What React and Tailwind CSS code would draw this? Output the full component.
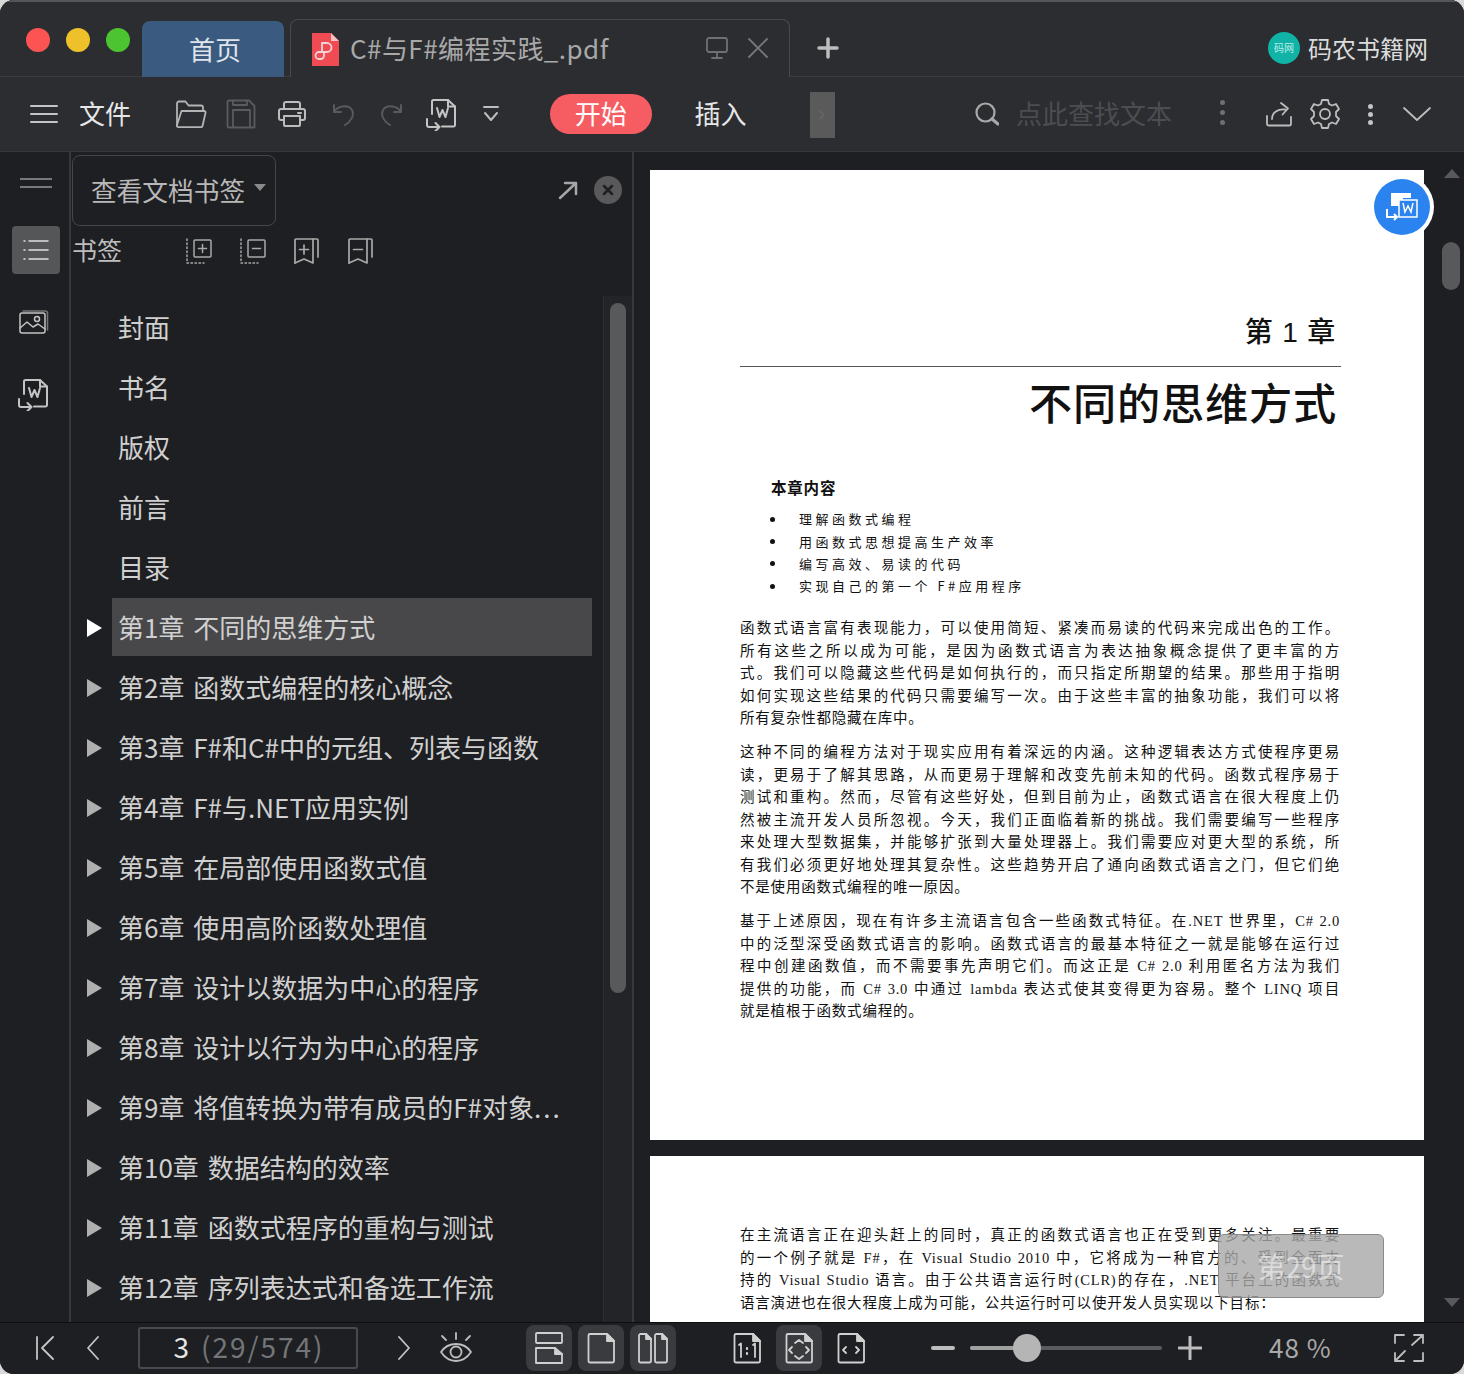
import React from "react";

const S = ({ w = 32, h = 32, vb, c = "#bdbdbd", sw = 2, children, className = "" }) => (
  <svg width={w} height={h} viewBox={vb || `0 0 ${w} ${h}`} fill="none" stroke={c} strokeWidth={sw} strokeLinecap="round" strokeLinejoin="round" className={`shrink-0 ${className}`}>
    {children}
  </svg>
);

const Dots = ({ c = "#9a9a9a", gap = "gap-[5px]", size = "w-[5px] h-[5px]" }) => (
  <div className={`flex flex-col ${gap}`}>
    <div className={`${size} rounded-full`} style={{ background: c }} />
    <div className={`${size} rounded-full`} style={{ background: c }} />
    <div className={`${size} rounded-full`} style={{ background: c }} />
  </div>
);

const WordConvert = ({ c = "#c4c4c4" }) => (
  <S w={34} h={34} c={c} sw={2}>
    <path d="M7 17V4.5a1.5 1.5 0 0 1 1.5-1.5H23l7 6.5V28a1.5 1.5 0 0 1-1.5 1.5H17" />
    <path d="M23 3v6.5h7" />
    <path d="M12 11l2.5 9 3-7 3 7 2.5-9" />
    <path d="M2 22v6a2 2 0 0 0 2 2h10M10.500 26l4 4-4 4" />
  </S>
);

const chapters = [
  ["封面"], ["书名"], ["版权"], ["前言"], ["目录"],
  ["第1章 不同的思维方式", 1, 1],
  ["第2章 函数式编程的核心概念", 1],
  ["第3章 F#和C#中的元组、列表与函数", 1],
  ["第4章 F#与.NET应用实例", 1],
  ["第5章 在局部使用函数式值", 1],
  ["第6章 使用高阶函数处理值", 1],
  ["第7章 设计以数据为中心的程序", 1],
  ["第8章 设计以行为为中心的程序", 1],
  [<>第9章 将值转换为带有成员的F#对象<span className="tracking-[2px]">...</span></>, 1],
  ["第10章 数据结构的效率", 1],
  ["第11章 函数式程序的重构与测试", 1],
  ["第12章 序列表达式和备选工作流", 1],
];

const p1 = ["函数式语言富有表现能力，可以使用简短、紧凑而易读的代码来完成出色的工作。", "所有这些之所以成为可能，是因为函数式语言为表达抽象概念提供了更丰富的方", "式。我们可以隐藏这些代码是如何执行的，而只指定所期望的结果。那些用于指明", "如何实现这些结果的代码只需要编写一次。由于这些丰富的抽象功能，我们可以将"];
const p2 = ["这种不同的编程方法对于现实应用有着深远的内涵。这种逻辑表达方式使程序更易", "读，更易于了解其思路，从而更易于理解和改变先前未知的代码。函数式程序易于", "测试和重构。然而，尽管有这些好处，但到目前为止，函数式语言在很大程度上仍", "然被主流开发人员所忽视。今天，我们正面临着新的挑战。我们需要编写一些程序", "来处理大型数据集，并能够扩张到大量处理器上。我们需要应对更大型的系统，所", "有我们必须更好地处理其复杂性。这些趋势开启了通向函数式语言之门，但它们绝"];
const p3 = ["基于上述原因，现在有许多主流语言包含一些函数式特征。在.NET 世界里，C# 2.0", "中的泛型深受函数式语言的影响。函数式语言的最基本特征之一就是能够在运行过", "程中创建函数值，而不需要事先声明它们。而这正是 C# 2.0 利用匿名方法为我们", "提供的功能，而 C# 3.0 中通过 lambda 表达式使其变得更为容易。整个 LINQ 项目"];
const p4 = ["在主流语言正在迎头赶上的同时，真正的函数式语言也正在受到更多关注。最重要", "的一个例子就是 F#，在 Visual Studio 2010 中，它将成为一种官方的、受到全面支", "持的 Visual Studio 语言。由于公共语言运行时(CLR)的存在，.NET 平台上的函数式"];

const pdfFont = "font-['Liberation_Serif','Noto_Sans_CJK_SC',serif]";

const Line = ({ children }) => (
  <div className="h-[22.5px] leading-[22.5px] whitespace-nowrap [text-align:justify] [text-align-last:justify]">{children}</div>
);
const LastLine = ({ children }) => (
  <div className="h-[22.5px] leading-[22.5px] whitespace-nowrap">{children}</div>
);

const Bullet = ({ children }) => (
  <div className="flex items-center h-[22.3px]">
    <div className="w-[5px] h-[5px] rounded-full bg-[#111] ml-[30px] mr-[24px]" />
    <div className="text-[13px] tracking-[3.500px] text-[#111]">{children}</div>
  </div>
);

const PageDoc = ({ children, className = "" }) => (
  <div className={`bg-white w-[774px] shrink-0 ${className}`}>{children}</div>
);

const IconBtn = ({ active, children }) => (
  <div className={`w-[46px] h-[46px] rounded-[8px] flex items-center justify-center ${active ? "bg-[#3a3b3e]" : ""}`}>{children}</div>
);

export default function App() {
  return (
    <div className="w-[1464px] h-[1374px] bg-[#d8d8d8] font-['Noto_Sans_CJK_SC',sans-serif] overflow-hidden">
      <div className="relative w-full h-full rounded-[14px] overflow-hidden flex flex-col bg-[#1e1f22]">
        {/* title bar */}
        <div className="h-[77px] shrink-0 bg-[#2b2d30] border-t-2 border-t-[#55565a] border-b border-b-[#3a3c40] flex items-end pl-[26px] pr-[36px]">
          <div className="flex gap-[16px] self-start mt-[26px]">
            <div className="w-[24px] h-[24px] rounded-full bg-[#fb5452]" />
            <div className="w-[24px] h-[24px] rounded-full bg-[#eec12a]" />
            <div className="w-[24px] h-[24px] rounded-full bg-[#4cc431]" />
          </div>
          <div className="ml-[12px] w-[142px] h-[56px] -mb-px rounded-t-[8px] bg-[#3b5a80] flex items-center justify-center text-[26px] text-[#dfe5ec] pb-[2px] pl-[4px]">首页</div>
          <div className="ml-[6px] w-[500px] h-[58px] -mb-px rounded-t-[8px] border border-b-0 border-[#47494d] bg-[#2b2d30] flex items-center pl-[20px] pr-[19px] pb-[2px]">
            <svg width="28" height="33" viewBox="0 0 28 33" className="shrink-0 mt-[3px]">
              <path d="M1 0h19l8 8v25H1z" fill="#ee4b53" />
              <path d="M20 0l8 8h-8z" fill="#f7c1c4" />
              <path d="M11 19V10h5a4.500 4.500 0 0 1 0 9h-8a3.500 3.500 0 0 0 0 7h2a3.500 3.500 0 0 0 3-4v-3" fill="none" stroke="#f3d3d5" strokeWidth="1.800" />
            </svg>
            <div className="ml-[11px] text-[26px] tracking-[0.450px] text-[#a9a9a9] whitespace-nowrap">C#与F#编程实践_.pdf</div>
            <div className="ml-auto flex items-center gap-[17px] pl-[1px]">
              <S w={24} h={24} c="#6f7073" sw={1.800}>
                <rect x="2" y="2" width="20" height="14" rx="2" />
                <path d="M12 16v6M7 22h10" />
              </S>
              <S w={24} h={24} c="#77787b" sw={1.800}>
                <path d="M3 3l18 18M21 3L3 21" />
              </S>
            </div>
          </div>
          <div className="ml-[27px] self-center mt-[17px]">
            <S w={22} h={22} c="#bdbdbd" sw={3.500}>
              <path d="M11 2v18M2 11h18" />
            </S>
          </div>
          <div className="ml-auto self-center flex items-center mt-[17px]">
            <div className="w-[32px] h-[32px] rounded-full bg-[#10b3a6] flex items-center justify-center text-[10px] text-[#bdeee8]">码网</div>
            <div className="ml-[8px] text-[24px] text-[#dcdcdc] whitespace-nowrap">码农书籍网</div>
          </div>
        </div>

        {/* toolbar */}
        <div className="h-[75px] shrink-0 bg-[#2b2d30] border-b border-b-[#35373a] flex items-center pl-[30px] pr-[33px]">
          <S w={28} h={20} c="#c4c4c4" sw={2}>
            <path d="M1 2h26M1 10h26M1 18h26" />
          </S>
          <div className="ml-[21px] text-[26px] text-[#e6e6e6] whitespace-nowrap pb-[4px]">文件</div>
          <div className="ml-[44px]">
            <S w={32} h={30} c="#b4b4b4" sw={1.800}>
              <path d="M2 26V4.500A2 2 0 0 1 4 2.500h6.500l3 4H26a2 2 0 0 1 2 2v3" />
              <path d="M6.500 12h22.500a1.500 1.500 0 0 1 1.500 2l-3 13a1.500 1.500 0 0 1-1.500 1.200H3.500A1.500 1.500 0 0 1 2 26z" />
            </S>
          </div>
          <div className="ml-[19px]">
            <S w={30} h={30} c="#5a5b5e" sw={1.800}>
              <path d="M3 1.500h20l5.500 5.500v21.500H3a1.500 1.500 0 0 1-1.500-1.500V3A1.500 1.500 0 0 1 3 1.500z" />
              <path d="M7 28V11h17v17M7 1.500V6h14V1.500" />
            </S>
          </div>
          <div className="ml-[22px]">
            <S w={28} h={26} c="#bcbcbc" sw={2}>
              <path d="M6 8V3a2 2 0 0 1 2-2h12a2 2 0 0 1 2 2v5" />
              <path d="M6 19H3a2 2 0 0 1-2-2v-7a2 2 0 0 1 2-2h22a2 2 0 0 1 2 2v7a2 2 0 0 1-2 2h-3" />
              <path d="M6 15h16v9a1 1 0 0 1-1 1H7a1 1 0 0 1-1-1zM20 12h3" />
            </S>
          </div>
          <div className="ml-[26px]">
            <S w={24} h={26} c="#58595c" sw={2}>
              <path d="M2 4v7h7M2 11c3-6 14-8 18-2 3 6-2 12-7 15" />
            </S>
          </div>
          <div className="ml-[23px]">
            <S w={24} h={26} c="#58595c" sw={2}>
              <path d="M22 4v7h-7M22 11c-3-6-14-8-18-2-3 6 2 12 7 15" />
            </S>
          </div>
          <div className="ml-[22px]">
            <WordConvert />
          </div>
          <div className="ml-[24px]">
            <S w={16} h={18} c="#bdbdbd" sw={2}>
              <path d="M1 2h14M2 8l6 7 6-7" />
            </S>
          </div>
          <div className="ml-[51px] w-[104px] h-[40px] rounded-full bg-[#f65d63] flex items-center justify-center text-[26px] text-white pb-[3px]">开始</div>
          <div className="ml-[43px] text-[26px] text-[#e6e6e6] whitespace-nowrap pb-[4px]">插入</div>
          <div className="ml-[63px] w-[26px] h-[46px] mt-[2px] bg-[#5a5a5a] flex items-center justify-center">
            <S w={8} h={12} c="#666" sw={1.500}>
              <path d="M2 2l4 4-4 4" />
            </S>
          </div>
          <div className="ml-[140px]">
            <S w={24} h={24} c="#a9a9a9" sw={2.200}>
              <circle cx="10.500" cy="10.500" r="9" />
              <path d="M17 17l6 5" strokeWidth={3.200} />
            </S>
          </div>
          <div className="ml-[17px] text-[26px] text-[#4c4d50] whitespace-nowrap pb-[4px]">点此查找文本</div>
          <div className="ml-[48px] -mt-[4px]">
            <Dots c="#6e6f72" gap="gap-[5px]" />
          </div>
          <div className="ml-[41px]">
            <S w={26} h={26} c="#bdbdbd" sw={1.800}>
              <path d="M1 15v8a1.500 1.500 0 0 0 1.500 1.500h21A1.500 1.500 0 0 0 25 23v-7" />
              <path d="M6 18c0-7 6-10 13-9.500M15 2l7 5.500-5.500 6" />
            </S>
          </div>
          <div className="ml-[17px]">
            <S w={32} h={32} c="#bdbdbd" sw={1.800}>
              <circle cx="16" cy="16" r="5" />
              <path d="M13 2h6l1 4 3 1.500 4-1.500 3 5-3 3v4l3 3-3 5-4-1.500-3 1.500-1 4h-6l-1-4-3-1.500-4 1.500-3-5 3-3v-4l-3-3 3-5 4 1.500 3-1.500z" />
            </S>
          </div>
          <div className="ml-[27px]">
            <Dots c="#c4c4c4" gap="gap-[3px]" />
          </div>
          <div className="ml-[30px]">
            <S w={28} h={16} c="#bdbdbd" sw={1.800}>
              <path d="M1 2l13 12L27 2" />
            </S>
          </div>
        </div>

        {/* main */}
        <div className="flex-1 min-h-0 flex">
          {/* rail */}
          <div className="w-[71px] shrink-0 border-r-2 border-r-[#38393c] flex flex-col items-center pl-[4px] pr-[1px]">
            <div className="mt-[26px] w-[32px] h-[6px] border-y-2 border-[#77787a] box-content" />
            <div className="mt-[38px] w-[48px] h-[48px] rounded-[4px] bg-[#555658] flex items-center justify-center">
              <S w={26} h={22} c="#e0e0e0" sw={1.500}>
                <path d="M6 2h19M6 11h19M6 20h19" />
                <path d="M1 2h1M1 11h1M1 20h1" />
              </S>
            </div>
            <div className="mt-[35px] -ml-[5px]">
              <S w={30} h={26} c="#c4c4c4" sw={1.500}>
                <rect x="1" y="4" width="25" height="20" rx="2" />
                <path d="M4 2h22a2 2 0 0 1 2.500 2v17" stroke="#777" />
                <path d="M1 19l7-6 6 5 5-3 7 5" />
                <circle cx="18" cy="10" r="2.500" />
              </S>
            </div>
            <div className="mt-[42px] -ml-[5px]">
              <WordConvert />
            </div>
          </div>

          {/* panel */}
          <div className="w-[561px] shrink-0 flex flex-col min-h-0">
            <div className="h-[74px] shrink-0 flex items-start pl-[1px] pr-[10px] pt-[3px]">
              <div className="w-[204px] h-[71px] rounded-[8px] border border-[#45464a] flex items-center pl-[18px] pr-[9px]">
                <div className="text-[25.700px] text-[#b8b8b8] whitespace-nowrap">查看文档书签</div>
                <div className="ml-[9px] -mt-[6px] w-0 h-0 border-x-[6px] border-x-transparent border-t-[7px] border-t-[#8a8a8a]" />
              </div>
              <div className="ml-auto flex items-center gap-[16px] mt-[21px]">
                <S w={20} h={20} c="#a6a6a6" sw={2.500}>
                  <path d="M2 18L18 3M7 3h11v11" />
                </S>
                <div className="w-[28px] h-[28px] rounded-full bg-[#59595b] flex items-center justify-center">
                  <S w={12} h={12} c="#1e1f22" sw={2.500}>
                    <path d="M2 2l8 8M10 2l-8 8" />
                  </S>
                </div>
              </div>
            </div>
            <div className="h-[50px] shrink-0 flex items-center pl-[1px]">
              <div className="text-[25px] text-[#bdbdbd] whitespace-nowrap pb-[2px]">书签</div>
              <div className="ml-[63px]">
                <S w={28} h={28} c="#a9a9a9" sw={1.500}>
                  <rect x="9" y="3" width="17" height="17" rx="1" />
                  <path d="M17.500 7.500v8M13.500 11.500h8" />
                  <path d="M2 2v24h17" strokeDasharray="1.500 2.500" />
                </S>
              </div>
              <div className="ml-[26px]">
                <S w={28} h={28} c="#a9a9a9" sw={1.500}>
                  <rect x="9" y="3" width="17" height="17" rx="1" />
                  <path d="M13.500 11.500h8" />
                  <path d="M2 2v24h17" strokeDasharray="1.500 2.500" />
                </S>
              </div>
              <div className="ml-[26px]">
                <S w={28} h={28} c="#a9a9a9" sw={1.700}>
                  <path d="M2 26V3a1 1 0 0 1 1-1h21a1 1 0 0 1 1 1v17" />
                  <path d="M20 2v24l-9-4-9 4" />
                  <path d="M11 8v9M6.500 12.500h9" />
                </S>
              </div>
              <div className="ml-[26px]">
                <S w={28} h={28} c="#a9a9a9" sw={1.700}>
                  <path d="M2 26V3a1 1 0 0 1 1-1h21a1 1 0 0 1 1 1v17" />
                  <path d="M20 2v24l-9-4-9 4" />
                  <path d="M6.500 12.500h9" />
                </S>
              </div>
            </div>
            <div className="mt-[20px] flex-1 min-h-0 flex overflow-hidden">
              <div className="w-[532px] pt-[1px] overflow-hidden">
                {chapters.map(([t, arrow, sel], i) => (
                  <div key={i} className="h-[60px] flex items-center">
                    <div className="w-[41px] flex justify-end pr-[10px] pt-[2px] shrink-0">
                      {arrow && (
                        <div className={`w-0 h-0 border-y-[9px] border-y-transparent border-l-[15px] ${sel ? "border-l-white" : "border-l-[#b0b0b0]"}`} />
                      )}
                    </div>
                    <div className={`w-[480px] h-[58px] flex items-center pl-[6px] pb-[2px] text-[26px] text-[#d0d0d0] whitespace-pre [word-spacing:3px] ${sel ? "bg-[#48484a]" : ""}`}>
                      {t}
                    </div>
                  </div>
                ))}
              </div>
              <div className="w-[29px] bg-[#232427] border-l border-[#2c2d30] pl-[6px] pt-[7px]">
                <div className="w-[16px] h-[690px] rounded-full bg-[#58595b]" />
              </div>
            </div>
          </div>

          {/* doc */}
          <div className="flex-1 min-w-0 border-l-2 border-l-[#38393c] flex overflow-hidden">
            <div className="w-[16px] shrink-0 bg-[#1e1f22]" />
            <div className={`w-[774px] shrink-0 flex flex-col gap-[16px] pt-[18px] text-[#111] ${pdfFont} overflow-hidden`}>
              <PageDoc className="h-[970px] pl-[90px] pr-[84px] text-[14.500px] tracking-[0.800px]">
                <div className="pt-[145px] h-[180px] text-right pr-[4px] font-['Liberation_Sans','Noto_Sans_CJK_SC',sans-serif] font-medium text-[28px] leading-[36px] text-[#111] whitespace-nowrap">第 1 章</div>
                <div className="mt-[16px] h-px w-[601px] bg-[#555]" />
                <div className="h-[75px] pt-[1px] pr-[3px] text-right font-['Noto_Sans_CJK_SC',sans-serif] font-medium text-[43.200px] leading-[66px] text-[#111] whitespace-nowrap">不同的思维方式</div>
                <div className="mt-[33px] ml-[31px] h-[24px] leading-[24px] font-['Noto_Sans_CJK_SC',sans-serif] font-bold text-[15.500px] tracking-[0.800px] text-[#111]">本章内容</div>
                <div className="mt-[9px] font-['Noto_Sans_CJK_SC',sans-serif]">
                  <Bullet>理解函数式编程</Bullet>
                  <Bullet>用函数式思想提高生产效率</Bullet>
                  <Bullet>编写高效、易读的代码</Bullet>
                  <Bullet>实现自己的第一个 F#应用程序</Bullet>
                </div>
                <div className="mt-[20px] w-[600px]">
                  {p1.map((l) => <Line key={l}>{l}</Line>)}
                  <LastLine>所有复杂性都隐藏在库中。</LastLine>
                </div>
                <div className="mt-[11.500px] w-[600px]">
                  {p2.map((l) => <Line key={l}>{l}</Line>)}
                  <LastLine>不是使用函数式编程的唯一原因。</LastLine>
                </div>
                <div className="mt-[11.500px] w-[600px]">
                  {p3.map((l) => <Line key={l}>{l}</Line>)}
                  <LastLine>就是植根于函数式编程的。</LastLine>
                </div>
              </PageDoc>
              <PageDoc className="h-[300px] pl-[90px] pr-[84px] pt-[68px] text-[14.500px] tracking-[0.800px]">
                <div className="w-[600px]">
                  {p4.map((l) => <Line key={l}>{l}</Line>)}
                  <LastLine>语言演进也在很大程度上成为可能，公共运行时可以使开发人员实现以下目标：</LastLine>
                </div>
              </PageDoc>
            </div>
            <div className="flex-1 min-w-0 pl-[18px] flex flex-col items-start">
              <div className="mt-[17px] ml-[2px] w-0 h-0 border-x-[8px] border-x-transparent border-b-[9px] border-b-[#58595b]" />
              <div className="mt-[64px] w-[18px] h-[48px] rounded-full bg-[#58595b]" />
              <div className="mt-auto mb-[15px] ml-[2px] w-0 h-0 border-x-[8px] border-x-transparent border-t-[9px] border-t-[#58595b]" />
            </div>
          </div>
        </div>

        {/* bottom bar */}
        <div className="h-[52px] shrink-0 bg-[#1e1f22] border-t border-t-[#0e0e10] flex items-center pl-[35px] pb-[2px]">
          <S w={20} h={24} c="#c4c4c4" sw={1.800}>
            <path d="M2 1v22M18 1L7 12l11 11" />
          </S>
          <div className="ml-[31px]">
            <S w={14} h={24} c="#c4c4c4" sw={1.800}>
              <path d="M12 1L2 12l10 11" />
            </S>
          </div>
          <div className="ml-[38px] w-[220px] h-[42px] rounded-[3px] border-2 border-[#48494c] flex items-center justify-center text-[28px] tracking-[2px] whitespace-nowrap pb-[3px] pl-[2px]">
            <span className="text-[#e6e6e6]">3</span>
            <span className="text-[#747578] ml-[10px]">(29/574)</span>
          </div>
          <div className="ml-[39px]">
            <S w={14} h={24} c="#c4c4c4" sw={1.800}>
              <path d="M2 1l10 11L2 23" />
            </S>
          </div>
          <div className="ml-[28px]">
            <S w={34} h={34} c="#bdbdbd" sw={1.800}>
              <path d="M2 21c4-6 9-8 15-8s11 2 15 8c-4 6-9 9-15 9s-11-3-15-9z" />
              <circle cx="17" cy="21" r="5.500" />
              <path d="M17 2v6M3 5l4 4M31 5l-4 4" />
            </S>
          </div>
          <div className="ml-[53px] flex gap-[6px]">
            <IconBtn active>
              <S w={30} h={32} c="#d0d0d0" sw={1.800}>
                <rect x="2" y="1" width="26" height="10" rx="1" />
                <path d="M2 16h19l7 6v9H2z" />
                <path d="M21 16v6h7" fill="#d0d0d0" />
              </S>
            </IconBtn>
            <IconBtn active>
              <S w={30} h={32} c="#d0d0d0" sw={1.800}>
                <path d="M4 2h17l7 7v20a1.500 1.500 0 0 1-1.500 1.500H4A1.500 1.500 0 0 1 2.500 29V3.500A1.500 1.500 0 0 1 4 2z" />
                <path d="M21 2v7h7z" fill="#d0d0d0" />
              </S>
            </IconBtn>
            <IconBtn active>
              <S w={32} h={32} c="#d0d0d0" sw={1.800}>
                <path d="M3 2h6l5 5v22a1.500 1.500 0 0 1-1.500 1.500h-9A1.500 1.500 0 0 1 2 29V3.500A1.500 1.500 0 0 1 3 2z" />
                <path d="M9 2v5h5z" fill="#d0d0d0" />
                <path d="M19 2h6l5 5v22a1.500 1.500 0 0 1-1.500 1.500h-9A1.500 1.500 0 0 1 18 29V3.500A1.500 1.500 0 0 1 19 2z" />
                <path d="M25 2v5h5z" fill="#d0d0d0" />
              </S>
            </IconBtn>
          </div>
          <div className="ml-[48px] w-[46px] flex justify-center">
            <S w={30} h={32} c="#d0d0d0" sw={1.800}>
              <path d="M4 2h17l7 7v20a1.500 1.500 0 0 1-1.500 1.500H4A1.500 1.500 0 0 1 2.500 29V3.500A1.500 1.500 0 0 1 4 2z" />
              <path d="M21 2v7h7z" fill="#d0d0d0" />
              <path d="M7 13l2-1.500V25M21 13l2-1.500V25" />
              <path d="M15 16v1M15 21v1" strokeWidth={2.200} />
            </S>
          </div>
          <div className="ml-[6px]">
            <IconBtn active>
              <S w={30} h={32} c="#d0d0d0" sw={1.800}>
                <path d="M4 2h17l7 7v20a1.500 1.500 0 0 1-1.500 1.500H4A1.500 1.500 0 0 1 2.500 29V3.500A1.500 1.500 0 0 1 4 2z" />
                <path d="M21 2v7h7z" fill="#d0d0d0" />
                <path d="M11 11l4-3 4 3M11 24l4 3 4-3M8 15l-3 3 3 3M22 15l3 3-3 3" />
              </S>
            </IconBtn>
          </div>
          <div className="ml-[6px] w-[46px] flex justify-center">
            <S w={30} h={32} c="#d0d0d0" sw={1.800}>
              <path d="M4 2h17l7 7v20a1.500 1.500 0 0 1-1.500 1.500H4A1.500 1.500 0 0 1 2.500 29V3.500A1.500 1.500 0 0 1 4 2z" />
              <path d="M21 2v7h7z" fill="#d0d0d0" />
              <path d="M10 15l-3 3 3 3M20 15l3 3-3 3" />
            </S>
          </div>
          <div className="ml-[57px] w-[24px] h-[4px] rounded-full bg-[#bdbdbd]" />
          <div className="ml-[15px] w-[192px] h-[4px] rounded-full bg-[#5a5b5e] flex items-center relative">
            <div className="w-[57px] h-full rounded-full bg-[#a0a0a0]" />
            <div className="-ml-[14px] w-[28px] h-[28px] rounded-full bg-[#b5b5b5] shrink-0" />
          </div>
          <div className="ml-[16px]">
            <S w={24} h={24} c="#bdbdbd" sw={3}>
              <path d="M12 1v22M1 12h22" />
            </S>
          </div>
          <div className="ml-[67px] text-[26px] text-[#a9a9a9] tracking-[1px] whitespace-nowrap pb-[2px]">48 %</div>
          <div className="ml-[62px]">
            <S w={30} h={30} c="#bdbdbd" sw={1.800}>
              <path d="M1 10V2h9M29 20v8h-9M20 2h9v8M29 2L18 12M1 28l10-10M1 20v8h9" />
            </S>
          </div>
        </div>

        {/* floating convert button */}
        <div className="absolute left-[1370px] top-[175px] w-[64px] h-[64px] rounded-full bg-white flex items-center justify-center">
          <div className="w-[56px] h-[56px] rounded-full bg-[#2a83ee] flex items-center justify-center">
            <svg width="34" height="30" viewBox="0 0 34 30">
              <path d="M6 1h20v5H6zM6 6h12v8H6z" fill="#fff" />
              <rect x="14" y="8" width="18" height="17" fill="#2a83ee" stroke="#fff" strokeWidth="1.500" />
              <path d="M18 11l2 9 3-6 3 6 2-9" fill="none" stroke="#fff" strokeWidth="1.500" />
              <path d="M2 17v8h10M9 22l3 3-3 3" fill="none" stroke="#fff" strokeWidth="2" />
            </svg>
          </div>
        </div>

        {/* page tooltip */}
        <div className="absolute left-[1218px] top-[1234px] w-[166px] h-[64px] rounded-[6px] border border-[#8c8c8c] bg-[#a8a8a8]/80 flex items-center justify-center text-[28px] text-white/50">第29页</div>
      </div>
    </div>
  );
}
